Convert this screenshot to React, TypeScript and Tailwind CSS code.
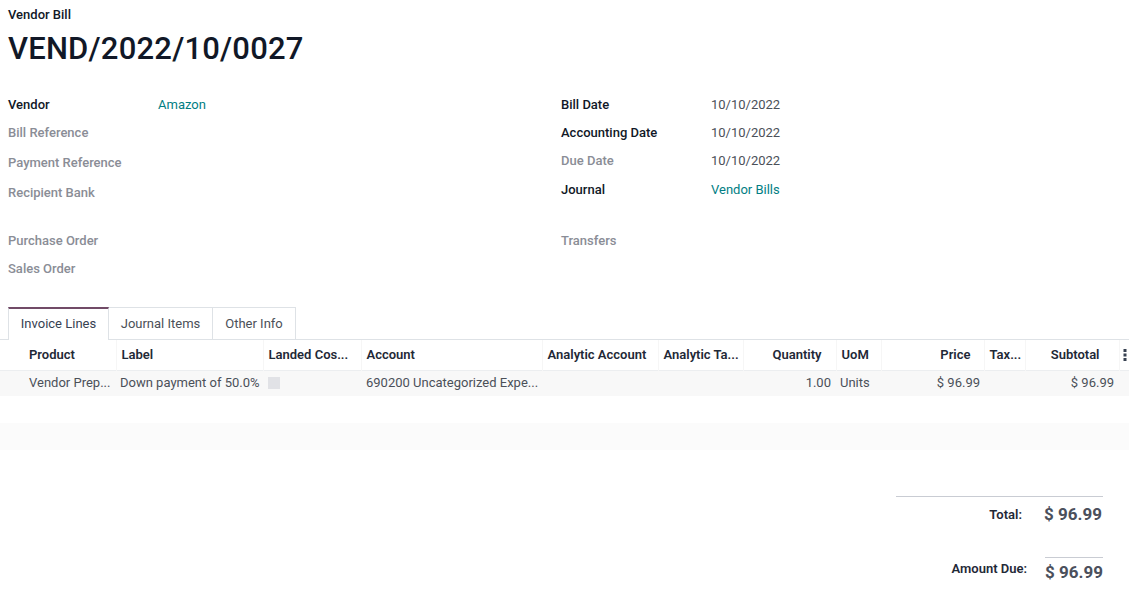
import React from "react";

const F = { fontFamily: "Roboto, 'Liberation Sans', sans-serif" };

function Field({ label, value, strong, link, h }: { label: string; value?: string; strong?: boolean; link?: boolean; h: string }) {
  return (
    <div className={`flex items-center ${h}`}>
      <div className={`w-[150px] shrink-0 text-[13px] font-medium ${strong ? "text-[#111827]" : "text-[#8a8d96]"}`}>{label}</div>
      {value && <div className={`text-[13px] ${link ? "text-[#017e84]" : "text-[#4b5058]"}`}>{value}</div>}
    </div>
  );
}

const cols = [
  { w: 24, label: "", align: "left", pr: "" },
  { w: 92, label: "Product", align: "left", pr: "" },
  { w: 147, label: "Label", align: "left", pr: "" },
  { w: 98, label: "Landed Cos...", align: "left", pr: "" },
  { w: 181, label: "Account", align: "left", pr: "" },
  { w: 116, label: "Analytic Account", align: "left", pr: "" },
  { w: 85, label: "Analytic Ta...", align: "left", pr: "" },
  { w: 93, label: "Quantity", align: "right", pr: "pr-[14px]" },
  { w: 45, label: "UoM", align: "left", pr: "" },
  { w: 103, label: "Price", align: "right", pr: "pr-[13px]" },
  { w: 41, label: "Tax...", align: "left", pr: "" },
  { w: 94, label: "Subtotal", align: "right", pr: "pr-[19px]" },
  { w: 10, label: "", align: "left", pr: "" },
];

export default function App() {
  return (
    <div style={F} className="w-[1129px] h-[599px] bg-white overflow-hidden">
      <div className="px-[8px]">
        <div className="pt-[6px] h-[24px] leading-[18px] text-[13px] font-medium text-[#111827]">Vendor Bill</div>
        <div className="mt-[6px] h-[37px] leading-[38px] text-[31px] tracking-[0.2px] font-medium text-[#111827]">VEND/2022/10/0027</div>

        <div className="mt-[24px] grid grid-cols-[553px_1fr] items-start">
          <div>
            <Field h="h-[28px]" label="Vendor" value="Amazon" strong link />
            <Field h="h-[28px]" label="Bill Reference" />
            <Field h="h-[32px]" label="Payment Reference" />
            <Field h="h-[28px]" label="Recipient Bank" />
          </div>
          <div>
            <Field h="h-[28px]" label="Bill Date" value="10/10/2022" strong />
            <Field h="h-[28px]" label="Accounting Date" value="10/10/2022" strong />
            <Field h="h-[28px]" label="Due Date" value="10/10/2022" />
            <Field h="h-[29px]" label="Journal" value="Vendor Bills" strong link />
          </div>
        </div>

        <div className="mt-[20px] grid grid-cols-[553px_1fr] items-start">
          <div>
            <Field h="h-[28px]" label="Purchase Order" />
            <Field h="h-[28px]" label="Sales Order" />
          </div>
          <div>
            <Field h="h-[28px]" label="Transfers" />
          </div>
        </div>
      </div>

      <div className="mt-[24px] flex border-b border-[#dee2e6] pl-[8px] h-[33px]">
        <div className="-mb-px h-[33px] w-[101px] flex items-center justify-center pb-[1px] bg-white border-x border-[#dee2e6] border-t-2 border-t-[#714b67] text-[13px] text-[#374151]">Invoice Lines</div>
        <div className="-mb-px h-[32px] w-[104px] flex items-center justify-center border-r border-t border-[#dee2e6] text-[13px] text-[#4b5058]">Journal Items</div>
        <div className="-mb-px h-[32px] w-[83px] flex items-center justify-center border-r border-t border-[#dee2e6] text-[13px] text-[#4b5058]">Other Info</div>
      </div>

      <table className="table-fixed border-collapse w-[1129px] text-[13px]">
        <colgroup>
          {cols.map((c, i) => (
            <col key={i} style={{ width: c.w }} />
          ))}
        </colgroup>
        <thead>
          <tr className="h-[30px] border-b border-[#eceef0] shadow-[0_1px_2px_rgba(0,0,0,0.05)]">
            {cols.map((c, i) => (
              <th
                key={i}
                className={`font-semibold text-[#1f2937] whitespace-nowrap overflow-hidden ${i > 1 ? "border-l border-[#f6f6f6]" : ""} ${c.align === "right" ? `text-right ${c.pr}` : "text-left pl-[5px]"}`}
              >
                {i === 12 ? (
                  <svg width="4" height="12" viewBox="0 0 4 12" className="ml-[-2px]">
                    <rect x="0.5" y="0" width="3" height="3" fill="#374151" />
                    <rect x="0.5" y="4.5" width="3" height="3" fill="#374151" />
                    <rect x="0.5" y="9" width="3" height="3" fill="#374151" />
                  </svg>
                ) : (
                  c.label
                )}
              </th>
            ))}
          </tr>
        </thead>
        <tbody>
          <tr className="h-[26px] bg-[#f8f8f8] text-[#4b5058]">
            <td></td>
            <td className="pl-[5px] pb-[2px] whitespace-nowrap">Vendor Prep...</td>
            <td className="pl-[4px] pb-[2px] whitespace-nowrap">Down payment of 50.0%</td>
            <td className="pl-[5px]">
              <div className="w-[12px] h-[12px] bg-[#e1e2e6]"></div>
            </td>
            <td className="pl-[5px] pb-[2px] whitespace-nowrap">690200 Uncategorized Expe...</td>
            <td></td>
            <td></td>
            <td className="text-right pr-[5px] pb-[2px]">1.00</td>
            <td className="pl-[4px] pb-[2px]">Units</td>
            <td className="text-right pr-[4px] pb-[2px]">$ 96.99</td>
            <td></td>
            <td className="text-right pr-[5px] pb-[2px]">$ 96.99</td>
            <td></td>
          </tr>
          <tr className="h-[27px] bg-white">
            <td colSpan={13}></td>
          </tr>
          <tr className="h-[27px] bg-[#fbfbfb]">
            <td colSpan={13}></td>
          </tr>
        </tbody>
      </table>

      <div className="mt-[46px] flex justify-end pr-[26px]">
        <div className="w-[207px]">
          <div className="border-t border-[#c9ccd3] h-[36px] flex items-center">
            <div className="w-[126px] text-right text-[13px] font-semibold text-[#1f2937]">Total:</div>
            <div className="flex-1 text-right text-[17px] font-bold text-[#4b505c] pr-[1px] whitespace-nowrap">$ 96.99</div>
          </div>
          <div className="mt-[25px] flex items-start">
            <div className="w-[132px] text-right text-[13px] font-semibold text-[#1f2937] pt-[2px] whitespace-nowrap">Amount Due:</div>
            <div className="ml-[18px] flex-1 border-t border-[#c9ccd3] pt-[2px] text-right text-[17px] font-bold text-[#4b505c] whitespace-nowrap">$ 96.99</div>
          </div>
        </div>
      </div>
    </div>
  );
}
